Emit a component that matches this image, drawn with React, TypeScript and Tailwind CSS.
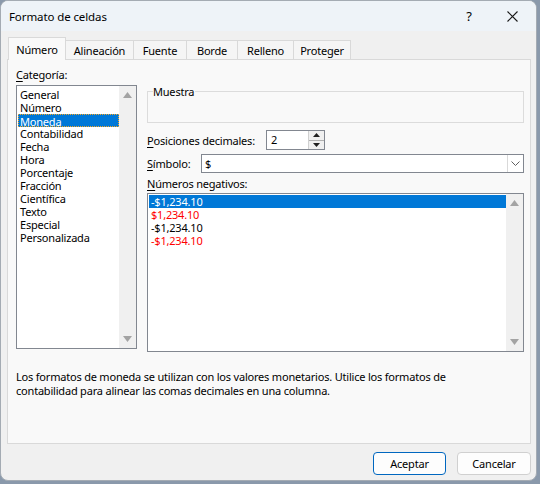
import { ReactNode } from "react";

const categories = [
  "General",
  "Número",
  "Moneda",
  "Contabilidad",
  "Fecha",
  "Hora",
  "Porcentaje",
  "Fracción",
  "Científica",
  "Texto",
  "Especial",
  "Personalizada",
];

const negatives = [
  { text: "-$1,234.10", red: false },
  { text: "$1,234.10", red: true },
  { text: "-$1,234.10", red: false },
  { text: "-$1,234.10", red: true },
];

const tabs = [
  { label: "Alineación", w: "w-[69px]" },
  { label: "Fuente", w: "w-[54px]" },
  { label: "Borde", w: "w-[52px]" },
  { label: "Relleno", w: "w-[57px]" },
  { label: "Proteger", w: "w-[58px]" },
];

const Key = ({ children }: { children: ReactNode }) => (
  <span className="underline underline-offset-2">{children}</span>
);

const ScrollBar = () => (
  <div className="flex w-[17px] flex-col items-center justify-between bg-[#f0f0f0] py-[6px]">
    <svg width="9" height="6" viewBox="0 0 9 6">
      <path d="M0 6 L4.5 0 L9 6 Z" fill="#a3a3a3" />
    </svg>
    <svg width="9" height="6" viewBox="0 0 9 6">
      <path d="M0 0 L4.5 6 L9 0 Z" fill="#a3a3a3" />
    </svg>
  </div>
);

const App = () => {
  return (
    <div
      className="h-[484px] w-[540px] bg-[#8a99ab] text-[11px] leading-[13px] tracking-[-0.2px] text-black"
      style={{ fontFamily: '"Segoe UI", "Noto Sans", sans-serif' }}
    >
      <div className="flex h-[481px] w-[537px] flex-col overflow-hidden rounded-[8px] border border-[#a4abb3] bg-[#f0f0f0]">
        {/* title bar */}
        <div className="flex h-[30px] shrink-0 items-center bg-[#eef3f8] pl-[8px]">
          <span className="flex-1 text-[11.5px] tracking-[-0.1px]">Formato de celdas</span>
          <span className="w-[20px] text-center text-[13px]">?</span>
          <div className="ml-[23px] mr-[14px] flex h-[20px] w-[20px] items-center justify-center">
            <svg width="11" height="11" viewBox="0 0 11 11">
              <path d="M0.5 0.5 L10.5 10.5 M10.5 0.5 L0.5 10.5" stroke="#1a1a1a" strokeWidth="1.1" />
            </svg>
          </div>
        </div>

        {/* tabs */}
        <div className="flex h-[28px] shrink-0 items-end pl-[7px] pt-[6px]">
          <div className="relative z-10 -mb-px flex h-[23px] w-[58px] items-center justify-center border border-b-0 border-[#d9d9d9] bg-[#f9f9f9]">
            Número
          </div>
          {tabs.map((t) => (
            <div
              key={t.label}
              className={`-ml-px flex h-[19px] items-center justify-center border border-b-0 border-[#d9d9d9] bg-[#f5f5f5] ${t.w}`}
            >
              {t.label}
            </div>
          ))}
        </div>

        {/* panel */}
        <div className="mx-[6px] flex h-[385px] w-[524px] flex-col border border-[#d9d9d9] bg-[#f9f9f9] pl-[8px] pr-[6px] pt-[8px]">
          <div className="flex gap-[10px]">
            {/* category */}
            <div className="flex w-[121px] flex-col">
              <div className="h-[17px] leading-[13px]">
                <Key>C</Key>ategoría:
              </div>
              <div className="flex h-[264px] border border-[#828790] bg-white">
                <div className="flex flex-1 flex-col pl-px pt-[2px]">
                  {categories.map((c) => (
                    <div
                      key={c}
                      className={`h-[13px] pl-[2px] leading-[13px] ${
                        c === "Moneda"
                          ? "border border-dotted border-[#f5a623] bg-[#0078d7] pl-px leading-[11px] text-white"
                          : ""
                      }`}
                    >
                      {c}
                    </div>
                  ))}
                </div>
                <ScrollBar />
              </div>
            </div>

            {/* right column */}
            <div className="flex flex-1 flex-col">
              <div className="relative mt-[23px] h-[32px] border border-[#dcdcdc]">
                <span className="absolute -top-[7px] left-[5px] bg-[#f9f9f9] pr-[1px]">
                  Muestra
                </span>
              </div>

              <div className="mt-[7px] flex h-[20px] items-center">
                <span className="w-[119px] whitespace-nowrap">
                  <Key>P</Key>osiciones decimales:
                </span>
                <div className="flex h-[20px] w-[59px] border border-[#828790] bg-white">
                  <span className="flex-1 pl-[4px] leading-[18px]">2</span>
                  <div className="flex w-[16px] flex-col border-l border-[#d0d0d0] bg-[#f0f0f0]">
                    <div className="flex flex-1 items-center justify-center border-b border-[#b0b0b0]">
                      <svg width="7" height="4" viewBox="0 0 7 4">
                        <path d="M0 4 L3.5 0 L7 4 Z" fill="#202020" />
                      </svg>
                    </div>
                    <div className="flex flex-1 items-center justify-center">
                      <svg width="7" height="4" viewBox="0 0 7 4">
                        <path d="M0 0 L3.5 4 L7 0 Z" fill="#202020" />
                      </svg>
                    </div>
                  </div>
                </div>
              </div>

              <div className="mt-[4px] flex h-[19px] items-center">
                <span className="w-[54px]">
                  <Key>S</Key>ímbolo:
                </span>
                <div className="flex h-[19px] flex-1 border border-[#828790] bg-white">
                  <span className="flex-1 pl-[3px] leading-[17px]">$</span>
                  <div className="flex w-[16px] items-center justify-center border-l border-[#d9d9d9]">
                    <svg width="9" height="5" viewBox="0 0 9 5">
                      <path d="M0.5 0.5 L4.5 4.5 L8.5 0.5" stroke="#606060" fill="none" strokeWidth="1" />
                    </svg>
                  </div>
                </div>
              </div>

              <div className="flex h-[20px] items-center">
                <span>
                  <Key>N</Key>úmeros negativos:
                </span>
              </div>
              <div className="flex h-[159px] border border-[#828790] bg-white">
                <div className="flex flex-1 flex-col pl-px pt-px">
                  {negatives.map((n, i) => (
                    <div
                      key={i}
                      className={`h-[13px] pl-[2px] leading-[13px] ${
                        i === 0
                          ? "bg-[#0078d7] text-white"
                          : n.red
                            ? "text-[#ff0000]"
                            : ""
                      }`}
                    >
                      {n.text}
                    </div>
                  ))}
                </div>
                <ScrollBar />
              </div>
            </div>
          </div>

          <p className="mt-[18px] leading-[14px]">
            Los formatos de moneda se utilizan con los valores monetarios. Utilice los formatos de
            <br />
            contabilidad para alinear las comas decimales en una columna.
          </p>
        </div>

        {/* buttons */}
        <div className="flex justify-end gap-[11px] pr-[5px] pt-[8px]">
          <button className="h-[23px] w-[73px] rounded-[4px] border border-[#0067c0] bg-[#fdfdfd]">
            Aceptar
          </button>
          <button className="h-[23px] w-[74px] rounded-[4px] border border-[#d0d0d0] bg-[#fdfdfd]">
            Cancelar
          </button>
        </div>
      </div>
    </div>
  );
};

export default App;
